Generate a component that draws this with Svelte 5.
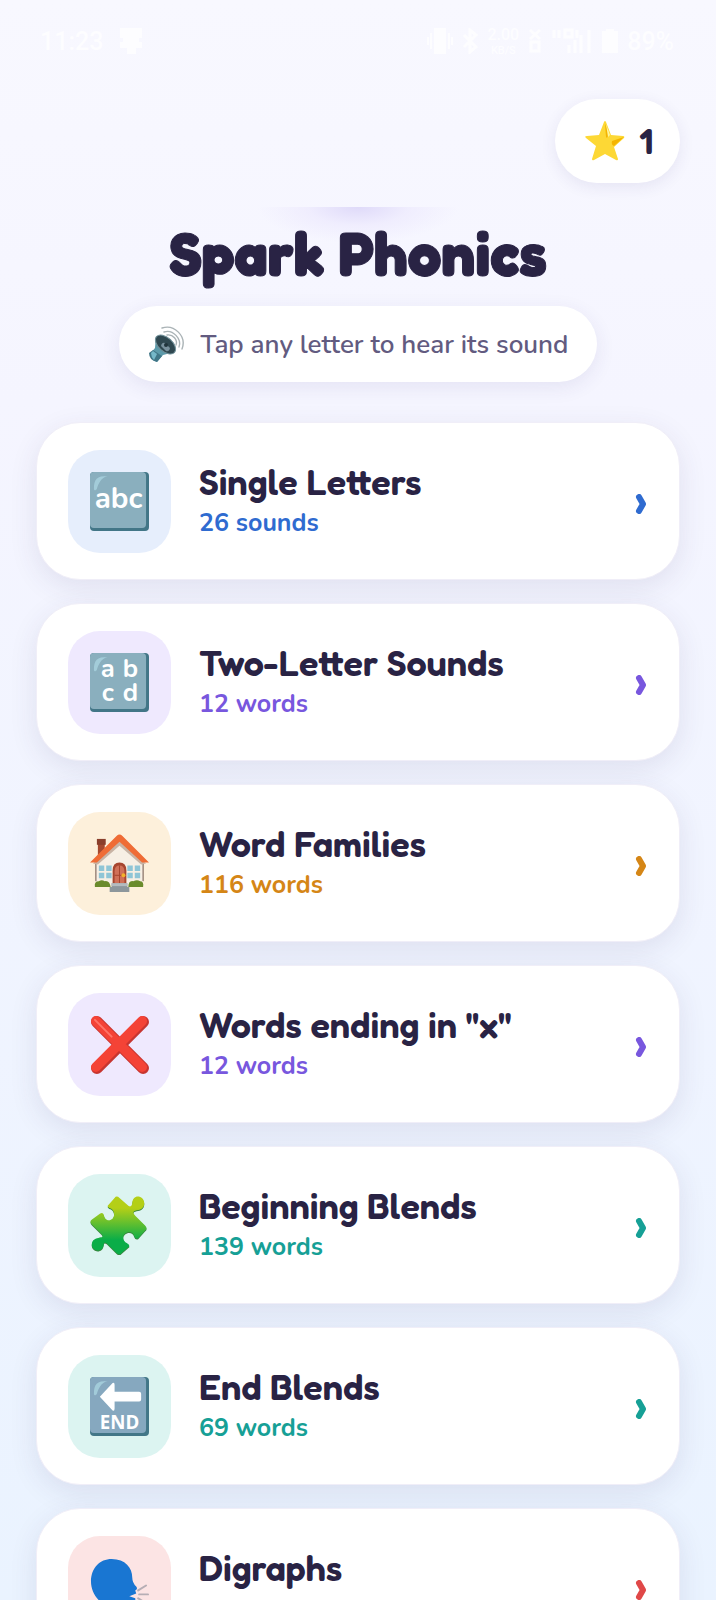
<script lang="ts">
	/**
	 * Spark Phonics home screen
	 *
	 * Header with the star counter, the app title and a hint,
	 * followed by the list of phonics categories.
	 */

	interface Category {
		title: string;
		count: string;
		icon: string;
		tone: string;
	}

	const stars = 1;

	const categories: Category[] = [
		{ title: 'Single Letters', count: '26 sounds', icon: 'abc', tone: 'blue' },
		{ title: 'Two-Letter Sounds', count: '12 words', icon: 'abcd', tone: 'violet' },
		{ title: 'Word Families', count: '116 words', icon: 'house', tone: 'amber' },
		{ title: 'Words ending in "x"', count: '12 words', icon: 'cross', tone: 'violet' },
		{ title: 'Beginning Blends', count: '139 words', icon: 'puzzle', tone: 'teal' },
		{ title: 'End Blends', count: '69 words', icon: 'end', tone: 'teal' },
		{ title: 'Digraphs', count: '', icon: 'speak', tone: 'red' }
	];
</script>

{#snippet tile(fill: string)}
	<rect width="60" height="60" rx="4" fill="#427687" />
	<rect width="57" height="57" rx="4" fill={fill} />
	<path d="M4 17C4 7 7 4 18 4c-7 2-9 7-11 13-1 2-3 2-3 0Z" fill="#a9d3e0" opacity="0.8" />
{/snippet}

<div class="screen">
	<div class="status-bar">
		<div class="status-group">
			<span>11:23</span>
			<svg width="24" height="30" viewBox="0 0 24 30" aria-hidden="true">
				<path d="M1 2h22v10h-3v4h3v6h-6v6H8v-6H1v-6h3v-4H1Z" fill="currentColor" />
			</svg>
		</div>
		<div class="status-group status-right">
			<svg width="26" height="30" viewBox="0 0 26 26" aria-hidden="true">
				<path d="M8 1h10v24H8ZM4 5v16M22 5v16M1 9v8M25 9v8" fill="currentColor" stroke="currentColor" stroke-width="2" />
			</svg>
			<svg width="16" height="26" viewBox="0 0 16 26" aria-hidden="true">
				<path d="m2 7 12 12-6 5V2l6 5L2 19" fill="none" stroke="currentColor" stroke-width="3" />
			</svg>
			<span class="speed"><span>2.00</span><span class="unit">KB/S</span></span>
			<svg width="14" height="26" viewBox="0 0 14 26" aria-hidden="true">
				<path d="M2 2l10 9M12 2 2 11M3 14h8v9H3Z" fill="none" stroke="currentColor" stroke-width="3" />
			</svg>
			<svg width="42" height="30" viewBox="0 0 42 26" aria-hidden="true">
				<path d="M3 2v8M8 2v8M14 2h7v7h-7ZM26 2v8M18 17v8M24 12v13M30 7v18M38 2v23" fill="none" stroke="currentColor" stroke-width="3" />
			</svg>
			<svg width="16" height="26" viewBox="0 0 16 26" aria-hidden="true">
				<path d="M4 1h8v2h4v22H0V3h4Z" fill="currentColor" />
			</svg>
			<span>89%</span>
		</div>
	</div>

	<header class="top-bar">
		<div class="star-counter">
			<svg width="40" height="40" viewBox="0 0 40 40" aria-hidden="true">
				<path d="M19 1q1-2 2 0l5 13 12 1q2 0 1 2l-10 9 4 12q0 2-2 1l-11-6-11 6q-2 1-2-1l4-13L1 17q-2-2 1-2l12-1Z" fill="#fdd835" />
				<path d="m20 3 1 13q1 2 2-1V9ZM27 20l12-4-10 9q-3-1-2-5Z" fill="#f4b400" />
				<path d="m21 3 4 11-2 2Z" fill="#fff59d" />
			</svg>
			<span>{stars}</span>
		</div>
	</header>

	<main class="content">
		<h1>Spark Phonics</h1>

		<p class="hint">
			<svg width="36" height="36" viewBox="0 0 36 36" aria-hidden="true">
				<g fill="none" stroke="#aab3b6" stroke-width="1.4" stroke-linecap="round">
					<path d="M14 2C26-2 39 10 34 23" />
					<path d="M16 6c9-3 18 7 15 15" />
					<path d="M19 9c6-1 11 5 9 10" />
				</g>
				<path d="m8 10-1 12-5 6q0 5 7 8l6-7 12-3Z" fill="#5c9aaa" />
				<path d="m1 27 4-3 9 6-5 6q-8-2-8-9Z" fill="#407687" />
				<path d="m3 27 2-2 4 3-3 6q-3-3-3-7Z" fill="#75b7c8" />
				<ellipse cx="17.5" cy="18.5" rx="12" ry="7" transform="rotate(42 17.5 18.5)" fill="#2f4850" stroke="#72929b" />
				<path d="M13 20q1-4 4-3l5 5q-1 4-4 3Z" fill="#78909c" />
				<circle cx="18" cy="19" r="2" fill="#20343b" />
			</svg>
			<span>Tap any letter to hear its sound</span>
		</p>

		<nav class="category-list" aria-label="Categories">
			{#each categories as category}
				<button type="button" class="category {category.tone}">
					<span class="category-icon">
						<svg width="59" height="59" viewBox="0 0 60 60" aria-hidden="true">
							{#if category.icon === 'abc'}
								{@render tile('#8aafbe')}
								<text class="glyph" x="29" y="37" font-size="30" text-anchor="middle">abc</text>
							{:else if category.icon === 'abcd'}
								{@render tile('#8aafbe')}
								<g class="glyph" font-size="26" text-anchor="middle">
									<text x="18" y="24">a</text>
									<text x="41" y="24">b</text>
									<text x="18" y="49">c</text>
									<text x="41" y="49">d</text>
								</g>
							{:else if category.icon === 'house'}
								<path d="M8 6h7v19H8Z" fill="#a5492f" />
								<path d="M7 5h9v6H7Z" fill="#8a3f2c" />
								<path d="M6 28 30 7l24 21v24H6Z" fill="#f7efe4" />
								<path d="M6 28v20M54 28v20" stroke="#6b5148" />
								<path d="M3 30 30 7l27 23-5 1-22-19L8 31Z" fill="#c8b3a4" />
								<path d="m0 29 27-27q3-3 6 0l27 27h-7L30 8 7 29Z" fill="#ef6c35" />
								<path d="M9 32h13v13H9ZM38 32h13v13H38Z" fill="#8fc5d6" />
								<path d="M15.5 31v15M8 38.5h15M44.5 31v15M37 38.5h15" stroke="#f7efe4" stroke-width="2" />
								<path d="M23 52V37q0-8 7-8t7 8v15Z" fill="#a6452f" />
								<path d="M25 52V38q0-6 5-6t5 6v14Z" fill="#d07058" />
								<path d="M25 42h10M30 32v18" stroke="#a6452f" />
								<circle cx="34" cy="42" r="2" fill="#f3b229" />
								<path d="M5 54q-1-6 4-6 3-2 6 0 5-1 6 6ZM39 54q0-7 5-6 4-2 7 0 4 0 3 6Z" fill="#6a8b2c" />
								<path d="M22 50h16v4h2v5H20v-5h2Z" fill="#8d979c" />
								<path d="M22 50h16v3H22Z" fill="#b4bbbf" />
							{:else if category.icon === 'cross'}
								<path d="m7 7 47 47M54 7 7 54" stroke="#c73530" stroke-width="12" stroke-linecap="round" />
								<path d="m6 6 47 47M53 6 6 53" stroke="#f44336" stroke-width="10" stroke-linecap="round" />
								<path d="m5 5 17 17" stroke="#ff7467" stroke-width="2" stroke-linecap="round" />
							{:else if category.icon === 'puzzle'}
								<defs>
									<linearGradient id="puzzle-green" x2="0" y2="1">
										<stop offset="0.2" stop-color="#b4cf17" />
										<stop offset="0.75" stop-color="#0aad48" />
									</linearGradient>
								</defs>
								<path transform="translate(0 1)" d="M25 2q2-3 5 0l9 8q3 2 4-2c0-12 14-8 12 1-1 5-5 5-9 6-3 1-2 3 0 5l10 10q3 3 0 5l-7 8q-3 1-4-2c-2-8-13-4-11 3 1 4 6 4 6 7l-9 8q-2 1-4-1L17 48q-3-2-3 1c-1 10-14 7-12-1 1-5 6-5 9-6 3 0 2-2 0-4L2 29q-3-3 0-5l8-6q3-2 4 1c2 10 13 5 10-3-1-4-6-3-6-6Z" fill="#39843c" />
								<path d="M25 2q2-3 5 0l9 8q3 2 4-2c0-12 14-8 12 1-1 5-5 5-9 6-3 1-2 3 0 5l10 10q3 3 0 5l-7 8q-3 1-4-2c-2-8-13-4-11 3 1 4 6 4 6 7l-9 8q-2 1-4-1L17 48q-3-2-3 1c-1 10-14 7-12-1 1-5 6-5 9-6 3 0 2-2 0-4L2 29q-3-3 0-5l8-6q3-2 4 1c2 10 13 5 10-3-1-4-6-3-6-6Z" fill="url(#puzzle-green)" />
							{:else if category.icon === 'end'}
								{@render tile('#86a8bf')}
								<path d="M10 20 23 6q2-1 2 2v7h25q2 0 2 2v6q0 2-2 2H25v7q0 3-2 2Z" fill="#fff" />
								<text class="glyph end" x="30" y="53" font-size="19" text-anchor="middle">END</text>
							{:else}
								<path d="M22 1C36 1 43 10 43 20q0 5 4 9 2 3-1 4l1 3-7 3 6 2q1 8-6 8h-5v11H9V43C4 38 1 31 1 24 1 10 10 1 22 1Z" fill="#1976d2" />
								<path d="m49 33 8-5M50 37h9M49 41l8 5" stroke="#b6aeb5" stroke-width="2" stroke-linecap="round" />
							{/if}
						</svg>
					</span>
					<span class="category-text">
						<span class="category-title">{category.title}</span>
						<span class="category-count">{category.count}</span>
					</span>
					<svg class="chevron" width="12" height="20" viewBox="0 0 12 20" aria-hidden="true">
						<path d="m4 3 4 7-4 7" />
					</svg>
				</button>
			{/each}
		</nav>
	</main>
</div>

<style>
	:global(body) {
		background: #f7f7ff;
	}

	.screen {
		height: 100vh;
		display: flex;
		flex-direction: column;
		overflow: hidden;
		background: linear-gradient(180deg, #f8f8ff 0%, #f5f5ff 25%, #eaf3ff 100%);
		color: #292344;
		font-family: Nunito, 'Open Sans', sans-serif;
	}

	.status-bar {
		display: flex;
		justify-content: space-between;
		align-items: center;
		box-sizing: border-box;
		height: 82px;
		padding: 0 42px 0 40px;
		color: #fdfdff;
		font-family: Roboto, sans-serif;
		font-size: 25px;
		font-weight: 500;
	}

	.status-group {
		display: flex;
		align-items: center;
		gap: 16px;
	}

	.status-right {
		gap: 9px;
	}

	.speed {
		display: flex;
		flex-direction: column;
		align-items: center;
		font-size: 16px;
		line-height: 19px;
	}

	.unit {
		font-size: 11px;
		line-height: 13px;
	}

	.top-bar {
		display: flex;
		justify-content: flex-end;
		padding: 17px 36px 24px;
	}

	.star-counter {
		display: flex;
		align-items: center;
		gap: 14px;
		box-sizing: border-box;
		height: 84px;
		padding: 0 27px 0 30px;
		border-radius: 42px;
		background: #fff;
		box-shadow: 0 4px 16px rgba(60, 45, 120, 0.09);
		font-family: Fredoka, Lato, sans-serif;
		font-size: 36px;
		font-weight: 600;
		line-height: 40px;
	}

	.content {
		flex: 1;
		display: flex;
		flex-direction: column;
		align-items: center;
		min-height: 0;
		overflow: hidden;
		background: radial-gradient(ellipse 100px 36px at 50% 0, #dfdaf9 0%, rgba(235, 231, 253, 0.6) 50%, transparent 100%) no-repeat;
	}

	h1 {
		margin: 11px 0 0;
		font-family: Fredoka, Lato, sans-serif;
		font-size: 60px;
		font-weight: 700;
		line-height: 70px;
		-webkit-text-stroke: 1px #292344;
	}

	.hint {
		display: flex;
		flex-shrink: 0;
		align-items: center;
		gap: 17px;
		box-sizing: border-box;
		height: 76px;
		margin: 18px 0 0;
		padding: 0 29px;
		border-radius: 38px;
		background: #fff;
		box-shadow: 0 5px 20px rgba(60, 45, 120, 0.09);
		color: #625b80;
		font-size: 26px;
		font-weight: 600;
		white-space: nowrap;
	}

	.category-list {
		display: flex;
		flex-direction: column;
		gap: 23px;
		align-self: stretch;
		padding: 40px 36px;
	}

	.category {
		display: flex;
		align-items: center;
		box-sizing: border-box;
		flex-shrink: 0;
		height: 158px;
		padding: 0 32px 0 31px;
		border: 1px solid #f0eef8;
		border-radius: 44px;
		background: #fff;
		box-shadow: 0 8px 28px rgba(60, 45, 100, 0.1);
		color: inherit;
		font-family: inherit;
		text-align: left;
		cursor: pointer;
	}

	.category-icon {
		display: flex;
		align-items: center;
		justify-content: center;
		width: 103px;
		height: 103px;
		border-radius: 32px;
		background: var(--tint);
	}

	.category-text {
		flex: 1;
		display: flex;
		flex-direction: column;
		gap: 2px;
		margin-left: 28px;
	}

	.category-title {
		font-family: Fredoka, Lato, sans-serif;
		font-size: 36px;
		font-weight: 600;
		line-height: 42px;
	}

	.category-count {
		min-height: 36px;
		color: var(--accent);
		font-size: 25px;
		font-weight: 700;
		line-height: 36px;
	}

	.glyph {
		fill: #fff;
		font-family: Nunito, Lato, sans-serif;
		font-weight: 700;
	}

	.end {
		font-family: 'Open Sans', sans-serif;
	}

	.chevron {
		margin-top: 6px;
	}

	.chevron path {
		fill: none;
		stroke: var(--accent);
		stroke-width: 6;
		stroke-linecap: round;
		stroke-linejoin: round;
	}

	.blue {
		--accent: #2f6bd0;
		--tint: #e6eefc;
	}

	.violet {
		--accent: #7857de;
		--tint: #efe9fe;
	}

	.amber {
		--accent: #d58616;
		--tint: #fdf0db;
	}

	.teal {
		--accent: #16a096;
		--tint: #dcf4f1;
	}

	.red {
		--accent: #e04848;
		--tint: #fce4e4;
	}
</style>
